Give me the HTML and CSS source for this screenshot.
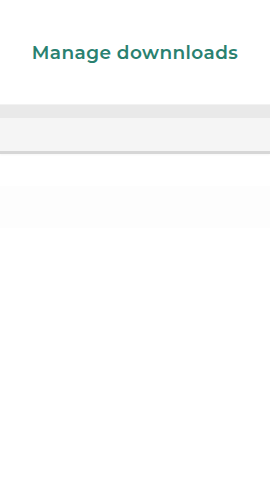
FILE: index.html
```html
<!DOCTYPE html>
<html lang="en">
<head>
    <meta charset="UTF-8">
    <meta name="viewport" content="width=device-width, initial-scale=1.0">
    <title>Manage downloads</title>
    <link rel="stylesheet" href="styles.css">
</head>
<body>
    <header class="top">
        <h1 class="title">Manage downnloads</h1>
    </header>
    <div class="tabs">
        <div class="tabs-head"></div>
        <div class="tabs-body"></div>
    </div>
    <div class="list">
        <div class="row"></div>
    </div>
</body>
</html>
```

FILE: styles.css
```css
body { margin: 0; background: #fff; font-family: "Montserrat", "Lato", "Open Sans", sans-serif; }
.top { height: 104px; display: flex; justify-content: center; padding-top: 39px; box-sizing: border-box; }
.title { margin: 0; font-size: 18.5px; font-weight: 600; color: #2a8170; letter-spacing: 0.4px; line-height: 27px; }
.tabs { border-bottom: 3px solid #d6d6d6; box-shadow: 0 1px 2px rgba(0,0,0,0.04); }
.tabs-head { height: 13px; background: #e9e9e9; border-top: 1px solid #f2f2f2; }
.tabs-body { height: 33px; background: #f5f5f5; }
.list { padding-top: 32px; }
.row { height: 42px; background: #fdfdfd; }
```
